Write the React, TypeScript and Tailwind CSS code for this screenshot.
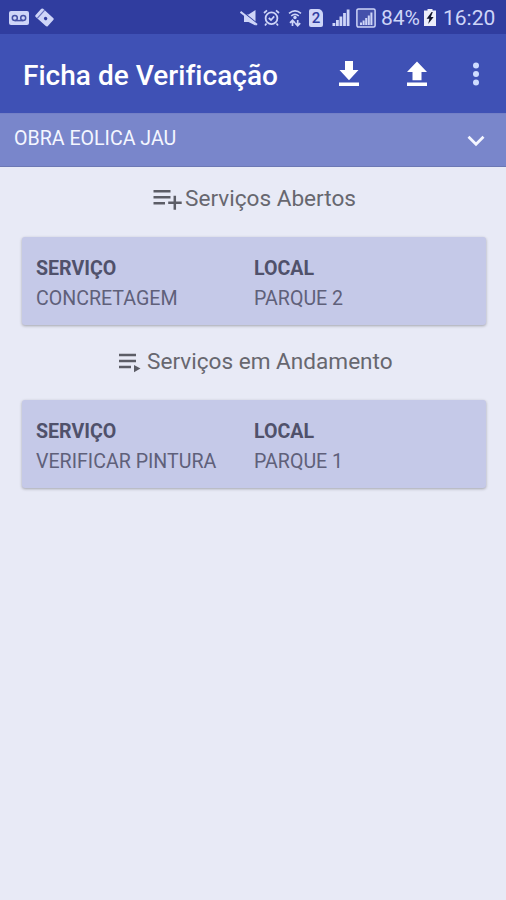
import type { ReactNode } from "react";

interface Service {
  name: string;
  place: string;
}

const openServices: Service[] = [{ name: "CONCRETAGEM", place: "PARQUE 2" }];
const runningServices: Service[] = [
  { name: "VERIFICAR PINTURA", place: "PARQUE 1" },
];

function StatusBar() {
  return (
    <div className="flex h-[34px] items-center bg-[#303d9f] pt-px text-[#ced5f8]">
      {/* Voicemail */}
      <svg className="ml-[9px] h-[14px] w-[20px]" viewBox="0 0 20 14">
        <rect width="20" height="14" rx="2" fill="currentColor" />
        <g fill="none" stroke="#4551a5" strokeWidth="1.5">
          <circle cx="5.8" cy="7" r="2.5" />
          <circle cx="14.2" cy="7" r="2.5" />
          <path d="M5.8 9.6h8.4" />
        </g>
      </svg>
      {/* Rotated tag */}
      <svg className="ml-[6px] h-[19px] w-[19px]" viewBox="0 0 19 19">
        <g transform="rotate(42 9.5 9.5)">
          <rect
            x="1.2"
            y="4"
            width="16.5"
            height="11"
            rx="1.5"
            fill="currentColor"
          />
          <path d="M4.7 4v11" stroke="#6570bd" strokeWidth="1.2" />
          <circle cx="11" cy="9.5" r="1.7" fill="#303d9f" />
        </g>
      </svg>

      <div className="ml-auto flex items-center">
        {/* Muted speaker */}
        <svg className="h-[18px] w-[18px]" viewBox="0 0 18 18">
          <path
            d="M4 5.5h4.5L15.5 1v15.500L8.500 13H4z"
            fill="currentColor"
          />
          <path d="M1 1.5l16 13" stroke="#303d9f" strokeWidth="1.6" />
          <path d="M0.5 2.800l16.5 13" stroke="currentColor" strokeWidth="2" />
        </svg>
        {/* Alarm */}
        <svg
          className="ml-[5px] h-[18px] w-[17px]"
          viewBox="0 0 17 18"
          fill="none"
          stroke="currentColor"
        >
          <circle cx="8.5" cy="9.3" r="5.9" strokeWidth="1.8" />
          <path
            d="M1 4l3-2.7M16 4l-3-2.7M3.5 14.5l-1.5 2M13.5 14.5l1.5 2M5.8 9l2.2 2 3.2-3.6"
            strokeWidth="1.7"
          />
        </svg>
        {/* Wifi sharing */}
        <svg
          className="ml-[8px] h-[18px] w-[14px]"
          viewBox="0 0 14 18"
          fill="none"
          stroke="currentColor"
        >
          <path d="M1 4.3q6-5 12 0M3.2 7q3.8-3.2 7.6 0" strokeWidth="1.6" />
          <circle cx="7" cy="8.5" r="1.7" fill="currentColor" stroke="none" />
          <path
            d="M4.5 17v-5.5M2 13.8l2.5-2.5L7 13.8M9.7 11v5.5M7.2 14.2l2.5 2.5 2.5-2.5"
            strokeWidth="1.7"
          />
        </svg>
        {/* SIM 2 */}
        <div className="ml-[7px] flex h-[18px] w-[14px] items-center justify-center rounded-[2px] rounded-tr-[5px] bg-[#ced5f8] pt-px text-[15px] font-medium leading-none text-[#303d9f]">
          2
        </div>
        {/* Signal bars */}
        <svg
          className="ml-[9px] h-[17px] w-[18px]"
          viewBox="0 0 18 17"
          fill="currentColor"
        >
          <path d="M0.5 14h2.8v3H0.5zM4 11h2.8v6H4zM7.5 7.5h2.8V17H7.5zM11.1 4h2.8v13h-2.8zM14.7 0.5h2.8V17h-2.8z" />
        </svg>
        <svg
          className="ml-[6px] h-[20px] w-[20px]"
          viewBox="0 0 20 20"
          fill="currentColor"
        >
          <rect
            x="0.9"
            y="0.9"
            width="18.2"
            height="18.2"
            rx="1.5"
            fill="#6c77c4"
            fillOpacity="0.35"
            stroke="currentColor"
            strokeWidth="1.5"
          />
          <path d="M4 14.5h2V17H4zM6.6 12.5h2V17H6.6zM9.2 10h2v7H9.2zM11.8 7.5h2V17h-2zM14.4 4.5h2V17h-2z" />
        </svg>
        <span className="ml-[5px] w-[40px] whitespace-nowrap pt-px text-[21px] leading-none">
          84%
        </span>
        {/* Charging battery */}
        <svg className="ml-[3px] h-[17px] w-[12px]" viewBox="0 0 12 17">
          <path d="M3.5 0h5v1.6H12V17H0V1.6h3.5z" fill="#eceefa" />
          <path d="M7.6 3L2.6 9.7h2.8L4.2 15l5.4-7H6.8l2-5z" fill="#11142b" />
        </svg>
        <span className="ml-[7px] mr-[10px] w-[53px] whitespace-nowrap pt-px text-[21px] leading-none">
          16:20
        </span>
      </div>
    </div>
  );
}

function AppBar() {
  return (
    <header className="flex h-[79px] items-center bg-[#3f51b5] text-white">
      <h1 className="ml-[23px] mt-[4px] whitespace-nowrap text-[28px] font-medium leading-none tracking-[0.03px]">
        Ficha de Verificação
      </h1>
      <button className="ml-auto" aria-label="Baixar">
        <svg
          className="h-[26px] w-[22px]"
          viewBox="0 0 22 26"
          fill="currentColor"
        >
          <path d="M7 0h8v9h5.5L11 19.2 1.5 9H7zM1 21.6h20V25H1z" />
        </svg>
      </button>
      <button className="ml-[46px]" aria-label="Enviar">
        <svg
          className="h-[26px] w-[22px]"
          viewBox="0 0 22 26"
          fill="currentColor"
        >
          <path d="M11 0.5l10 10.500h-5.500v8.200h-9V11H1zM1 21.6h20V25H1z" />
        </svg>
      </button>
      <button className="ml-[44px] mr-[26px]" aria-label="Mais">
        <svg className="h-[24px] w-[8px]" viewBox="0 0 8 24" fill="#cfdcff">
          <circle cx="4" cy="3.5" r="3" />
          <circle cx="4" cy="12" r="3" />
          <circle cx="4" cy="20.5" r="3" />
        </svg>
      </button>
    </header>
  );
}

function SiteSelect() {
  return (
    <div className="flex h-[54px] items-center border-b border-t border-b-[#6c78b4] border-t-[#7480c6] bg-[#7986cb] pl-[14px] pr-[21px] text-[#f4f6ff]">
      <span className="-mt-[2px] text-[19.6px] leading-none">
        OBRA EOLICA JAU
      </span>
      <svg
        className="ml-auto mt-[2px] h-[12px] w-[18px]"
        viewBox="0 0 18 12"
        fill="none"
        stroke="currentColor"
        strokeWidth="2.8"
      >
        <path d="M1.5 1.8L9 9.2l7.5-7.4" />
      </svg>
    </div>
  );
}

function SectionTitle({ children }: { children: ReactNode }) {
  return (
    <h2 className="flex items-start whitespace-nowrap text-[22.6px] leading-[23px] text-[#67676f]">
      {children}
    </h2>
  );
}

function ServiceCard({ service }: { service: Service }) {
  return (
    <div className="ml-[22px] mr-[20px] flex h-[88px] rounded-[3px] bg-[#c5c9e8] pl-[14px] pt-[17px] text-[19.6px] leading-[30px] text-[#5f607a] shadow-[0_1px_3px_rgba(0,0,0,0.3)]">
      <div className="w-[218px] whitespace-nowrap">
        <p className="font-bold text-[#50516b]">SERVIÇO</p>
        <p>{service.name}</p>
      </div>
      <div className="whitespace-nowrap">
        <p className="font-bold text-[#50516b]">LOCAL</p>
        <p>{service.place}</p>
      </div>
    </div>
  );
}

export default function App() {
  return (
    <div className="flex h-[900px] w-[506px] flex-col overflow-hidden bg-[#e8eaf6] font-['Roboto',sans-serif]">
      <StatusBar />
      <AppBar />
      <SiteSelect />

      <div className="flex h-[70px] items-start pl-[153px] pt-[20px]">
        <SectionTitle>
          <svg
            className="h-[24px] w-[30px]"
            viewBox="0 0 30 24"
            fill="none"
            stroke="#5c5d66"
            strokeWidth="2.5"
          >
            <path d="M0.5 4.3h17M0.5 10.3h17M0.5 16.3h11.5M15.2 15.8h13.5M21.8 8.7v14" />
          </svg>
          <span className="ml-[2px]">Serviços Abertos</span>
        </SectionTitle>
      </div>
      {openServices.map((service) => (
        <ServiceCard key={service.name} service={service} />
      ))}

      <div className="flex h-[75px] items-start pl-[119px] pt-[25px]">
        <SectionTitle>
          <svg className="h-[24px] w-[22px]" viewBox="0 0 22 24">
            <path
              d="M0 5h17M0 11h17M0 17h12"
              stroke="#5c5d66"
              strokeWidth="2.3"
            />
            <path d="M15 15l6.5 3.6-6.5 3.6z" fill="#5c5d66" />
          </svg>
          <span className="ml-[6px]">Serviços em Andamento</span>
        </SectionTitle>
      </div>
      {runningServices.map((service) => (
        <ServiceCard key={service.name} service={service} />
      ))}
    </div>
  );
}
